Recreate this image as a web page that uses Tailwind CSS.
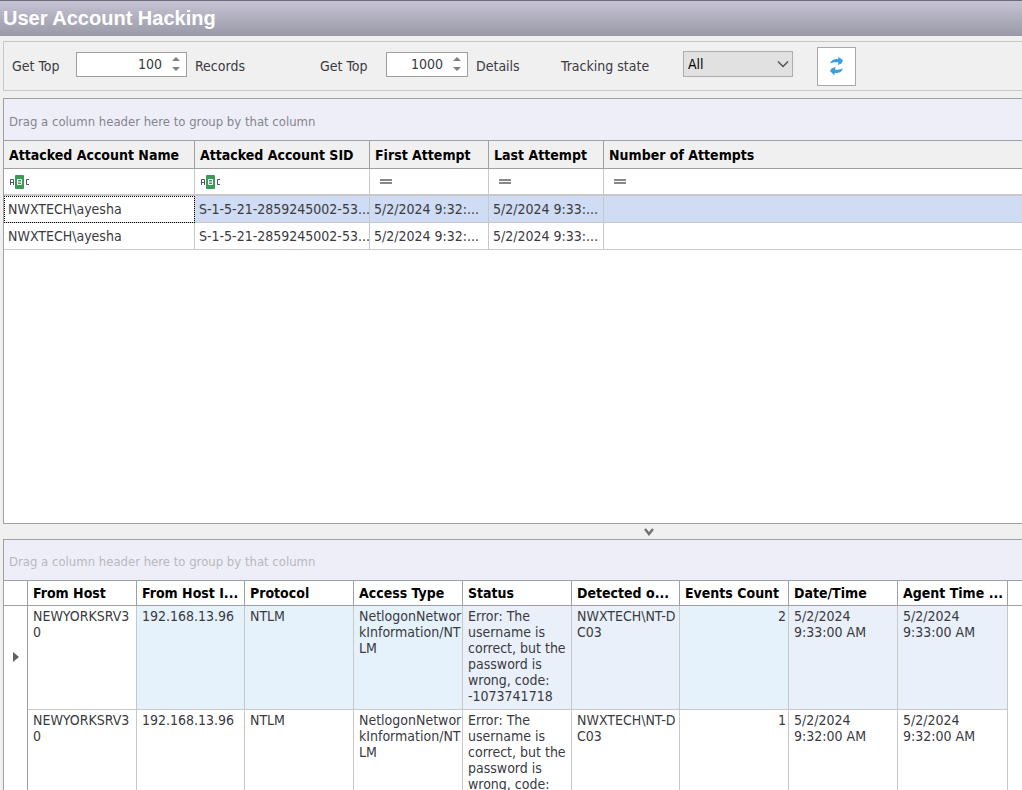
<!DOCTYPE html>
<html lang="en">
<head>
  <meta charset="UTF-8" />
  <meta name="viewport" content="width=device-width, initial-scale=1" />
  <title>User Account Hacking</title>
  <script src="https://cdn.jsdelivr.net/npm/@tailwindcss/browser@4"></script>
</head>
<body class="h-screen overflow-hidden flex flex-col bg-[#f0f0f0] text-[#3a3a3f] text-[14px] leading-4 font-['DejaVu_Sans_Condensed','DejaVu_Sans',sans-serif]">

  <header class="h-9 shrink-0 flex items-center px-[3px] pb-[2px] border-t border-[#6e6c7c] bg-linear-to-b from-[#c6c4d4] to-[#9a99a8]">
    <h1 class="text-[20px] leading-6 font-bold text-white font-['Liberation_Sans',sans-serif]">User Account Hacking</h1>
  </header>

  <!-- Toolbar -->
  <form class="mt-[5px] ml-[3px] h-[50px] shrink-0 flex items-center pl-2 border border-r-0 border-[#c8c8c8] whitespace-nowrap">
    <label for="topRecords" class="w-16">Get Top</label>
    <div class="flex w-[111px] h-[25px] mb-1 bg-white border border-[#a0a0a0]">
      <input id="topRecords" type="number" value="100" class="flex-1 min-w-0 text-right outline-none appearance-none [-moz-appearance:textfield] [&::-webkit-inner-spin-button]:appearance-none" />
      <div class="w-6 flex flex-col justify-center items-center gap-[6px] pl-1">
        <button type="button" aria-label="More records"><svg class="block" width="8" height="4" viewBox="0 0 8 4" fill="#808080"><path d="M0 4L4 0L8 4Z" /></svg></button>
        <button type="button" aria-label="Fewer records"><svg class="block" width="8" height="4" viewBox="0 0 8 4" fill="#808080"><path d="M0 0L4 4L8 0Z" /></svg></button>
      </div>
    </div>
    <span class="w-[133px] pl-2">Records</span>
    <label for="topDetails" class="w-[66px]">Get Top</label>
    <div class="flex w-[82px] h-[25px] mb-1 bg-white border border-[#a0a0a0]">
      <input id="topDetails" type="number" value="1000" class="flex-1 min-w-0 text-right outline-none appearance-none [-moz-appearance:textfield] [&::-webkit-inner-spin-button]:appearance-none" />
      <div class="w-6 flex flex-col justify-center items-center gap-[6px] pl-1">
        <button type="button" aria-label="More details"><svg class="block" width="8" height="4" viewBox="0 0 8 4" fill="#808080"><path d="M0 4L4 0L8 4Z" /></svg></button>
        <button type="button" aria-label="Fewer details"><svg class="block" width="8" height="4" viewBox="0 0 8 4" fill="#808080"><path d="M0 0L4 4L8 0Z" /></svg></button>
      </div>
    </div>
    <span class="w-[93px] pl-2">Details</span>
    <label for="tracking" class="w-[122px]">Tracking state</label>
    <div class="relative mb-1">
      <select id="tracking" class="block appearance-none w-[110px] h-[26px] pl-1 bg-[#e1e1e1] border border-[#adadad] text-black outline-none">
        <option>All</option>
      </select>
      <svg class="absolute right-1 top-2 pointer-events-none" width="12" height="10" viewBox="0 0 12 10" fill="none" stroke="#505050" stroke-width="1.4"><path d="M1 2.5L6 7.5L11 2.5" /></svg>
    </div>
    <button type="button" aria-label="Refresh" class="ml-6 w-[39px] h-[39px] flex items-center justify-center bg-white border border-[#a8a8a8]">
      <svg width="15" height="20" viewBox="0 0 15 20" fill="#3a9fdc">
        <path d="M1 7.500C2.500 3.500 5.500 2.500 9.500 3L8.500 0.500L14 4L12.500 7.500L9 9L9.500 6.500C6 6 3.500 6.500 1 7.500Z" />
        <path d="M14 12.500C12.500 16.500 9.500 17.500 5.500 17L5.500 19.500L1 15L2.500 12.500L6.500 11L6 13.500C9 14 11.500 13.500 14 12.500Z" />
      </svg>
    </button>
  </form>

  <!-- Attacked accounts -->
  <section class="mt-[7px] ml-[3px] min-h-0 flex-[426] overflow-hidden bg-white border border-r-0 border-[#a0a0a0]">
    <p class="h-[42px] flex items-center pt-1 pl-[5px] bg-[#eeeef8] border-b border-[#a0a0a0] text-[13px] text-[#85858c]">Drag a column header here to group by that column</p>
    <table class="w-full table-fixed border-separate border-spacing-0 text-left whitespace-nowrap">
      <colgroup><col class="w-[191px]" /><col class="w-[175px]" /><col class="w-[119px]" /><col class="w-[115px]" /><col /></colgroup>
      <thead class="bg-[#f0f0f0] text-black">
        <tr class="h-7 *:px-[5px] *:border-b *:border-r *:border-[#a0a0a0]">
          <th>Attacked Account Name</th>
          <th>Attacked Account SID</th>
          <th>First Attempt</th>
          <th>Last Attempt</th>
          <th class="border-r-0!">Number of Attempts</th>
        </tr>
      </thead>
      <tbody>
        <tr class="h-[27px] *:px-[5px] *:border-r *:border-b-2 *:border-[#c8c8c8]">
          <td>
            <svg width="22" height="14" viewBox="0 0 22 14" fill="none" stroke="#555" stroke-width="1">
              <path d="M1.500 10V4.500H4.500V10M1.500 7.500H4.500" />
              <rect x="6" y="0" width="9" height="14" rx="1" fill="#3c9a58" stroke="none" />
              <path d="M8.500 4.500H12.500V9.500H8.500ZM8.500 7H12.500" stroke="#fff" />
              <path d="M20 4.500H17.500V9.500H20" />
            </svg>
          </td>
          <td>
            <svg width="22" height="14" viewBox="0 0 22 14" fill="none" stroke="#555" stroke-width="1">
              <path d="M1.500 10V4.500H4.500V10M1.500 7.500H4.500" />
              <rect x="6" y="0" width="9" height="14" rx="1" fill="#3c9a58" stroke="none" />
              <path d="M8.500 4.500H12.500V9.500H8.500ZM8.500 7H12.500" stroke="#fff" />
              <path d="M20 4.500H17.500V9.500H20" />
            </svg>
          </td>
          <td><svg class="ml-[5px]" width="12" height="5" viewBox="0 0 12 5" fill="#888"><path d="M0 0H12V2H0ZM0 3H12V5H0Z" /></svg></td>
          <td><svg class="ml-[5px]" width="12" height="5" viewBox="0 0 12 5" fill="#888"><path d="M0 0H12V2H0ZM0 3H12V5H0Z" /></svg></td>
          <td class="border-r-0!"><svg class="ml-[5px]" width="12" height="5" viewBox="0 0 12 5" fill="#888"><path d="M0 0H12V2H0ZM0 3H12V5H0Z" /></svg></td>
        </tr>
        <tr class="h-[27px] bg-[#cfdcf3] *:pl-1 *:border-r *:border-b *:border-[#c8c8c8]">
          <td class="bg-white outline outline-dotted outline-black -outline-offset-1">NWXTECH\ayesha</td>
          <td>S-1-5-21-2859245002-53...</td>
          <td>5/2/2024 9:32:...</td>
          <td>5/2/2024 9:33:...</td>
          <td class="border-r-0!"></td>
        </tr>
        <tr class="h-[27px] *:pl-1 *:border-r *:border-b *:border-[#c8c8c8]">
          <td>NWXTECH\ayesha</td>
          <td>S-1-5-21-2859245002-53...</td>
          <td>5/2/2024 9:32:...</td>
          <td>5/2/2024 9:33:...</td>
          <td class="border-r-0!"></td>
        </tr>
      </tbody>
    </table>
  </section>

  <!-- Splitter -->
  <div class="h-[15px] shrink-0 flex items-center justify-center pl-[275px]">
    <svg width="10" height="8" viewBox="0 0 10 8" fill="none" stroke="#707070" stroke-width="2.400"><path d="M1 1L5 6L9 1" /></svg>
  </div>

  <!-- Event details -->
  <section class="ml-[3px] min-h-0 flex-[251] overflow-hidden bg-white border border-r-0 border-b-0 border-[#a0a0a0]">
    <p class="h-[41px] flex items-center pt-1 pl-[5px] bg-[#eeeef8] border-b border-[#a0a0a0] text-[13px] text-[#b8b8be]">Drag a column header here to group by that column</p>
    <table class="w-full table-fixed border-separate border-spacing-0 text-left">
      <colgroup><col class="w-6" /><col class="w-[109px]" /><col class="w-[108px]" /><col class="w-[109px]" /><col class="w-[109px]" /><col class="w-[109px]" /><col class="w-[108px]" /><col class="w-[109px]" /><col class="w-[109px]" /><col class="w-[110px]" /><col /></colgroup>
      <thead class="text-black whitespace-nowrap">
        <tr class="h-[25px] *:px-[5px] *:border-b *:border-r *:border-[#a0a0a0]">
          <th></th>
          <th>From Host</th>
          <th>From Host I...</th>
          <th>Protocol</th>
          <th>Access Type</th>
          <th>Status</th>
          <th>Detected o...</th>
          <th>Events Count</th>
          <th>Date/Time</th>
          <th>Agent Time ...</th>
          <th class="border-r-0!"></th>
        </tr>
      </thead>
      <tbody class="align-top whitespace-nowrap">
        <tr class="h-[104px] bg-[#e5f2fb] *:px-[5px] *:pt-[2px] *:pb-1 *:border-b *:border-r *:border-[#c8c8c8]">
          <td class="bg-white align-middle border-b-0! border-r-[#a0a0a0]!"><svg class="ml-1" width="6" height="10" viewBox="0 0 6 10" fill="#606060"><path d="M0 0L6 5L0 10Z" /></svg></td>
          <td class="bg-white">NEWYORKSRV3<br />0</td>
          <td>192.168.13.96</td>
          <td>NTLM</td>
          <td>NetlogonNetwor<br />kInformation/NT<br />LM</td>
          <td class="bg-[#e9f0f9]">Error: The<br />username is<br />correct, but the<br />password is<br />wrong, code:<br />-1073741718</td>
          <td class="bg-[#e9f0f9]">NWXTECH\NT-D<br />C03</td>
          <td class="text-right pr-[2px]!">2</td>
          <td class="bg-[#e9f0f9]">5/2/2024<br />9:33:00 AM</td>
          <td class="bg-[#e9f0f9]">5/2/2024<br />9:33:00 AM</td>
          <td class="bg-white border-0!"></td>
        </tr>
        <tr class="h-[104px] *:px-[5px] *:pt-[2px] *:pb-1 *:border-b *:border-r *:border-[#c8c8c8]">
          <td class="border-r-[#a0a0a0]!"></td>
          <td>NEWYORKSRV3<br />0</td>
          <td>192.168.13.96</td>
          <td>NTLM</td>
          <td>NetlogonNetwor<br />kInformation/NT<br />LM</td>
          <td>Error: The<br />username is<br />correct, but the<br />password is<br />wrong, code:<br />-1073741718</td>
          <td>NWXTECH\NT-D<br />C03</td>
          <td class="text-right pr-[2px]!">1</td>
          <td>5/2/2024<br />9:32:00 AM</td>
          <td>5/2/2024<br />9:32:00 AM</td>
          <td class="border-0!"></td>
        </tr>
      </tbody>
    </table>
  </section>

</body>
</html>
